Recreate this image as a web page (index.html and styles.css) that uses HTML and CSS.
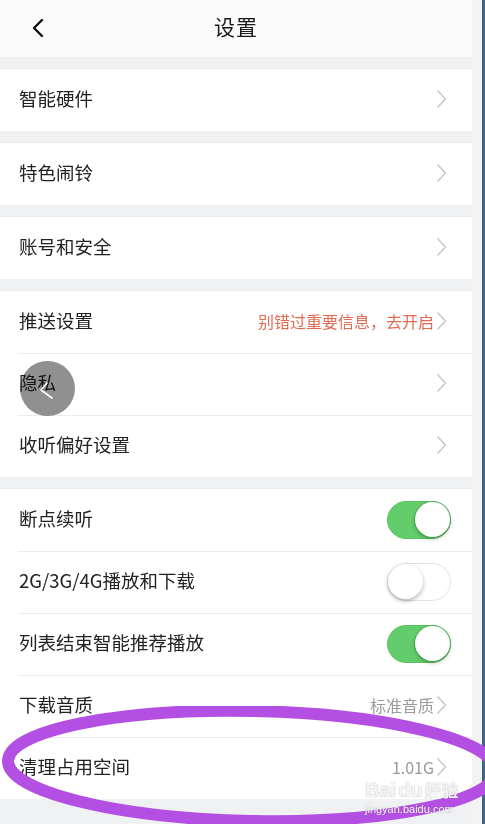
FILE: index.html
```html
<!DOCTYPE html>
<html lang="zh">
<head>
<meta charset="utf-8">
<link rel="stylesheet" href="styles.css">
</head>
<body>
<div class="screen">
  <div class="phone">
    <header class="nav">
      <svg class="back" width="14" height="20" viewBox="0 0 14 20"><path d="M11 2 L3 10 L11 18" fill="none" stroke="#111" stroke-width="2.4" stroke-linecap="round" stroke-linejoin="round"/></svg>
      <div class="title">设置</div>
    </header>

    <section class="group">
      <div class="row"><span class="label">智能硬件</span><svg class="chev" width="11" height="20" viewBox="0 0 11 20"><path d="M1.5 1.5 L9.5 10 L1.5 18.5" fill="none" stroke="#c3c3c3" stroke-width="1.3"/></svg></div>
    </section>
    <section class="group">
      <div class="row"><span class="label">特色闹铃</span><svg class="chev" width="11" height="20" viewBox="0 0 11 20"><path d="M1.5 1.5 L9.5 10 L1.5 18.5" fill="none" stroke="#c3c3c3" stroke-width="1.3"/></svg></div>
    </section>
    <section class="group">
      <div class="row"><span class="label">账号和安全</span><svg class="chev" width="11" height="20" viewBox="0 0 11 20"><path d="M1.5 1.5 L9.5 10 L1.5 18.5" fill="none" stroke="#c3c3c3" stroke-width="1.3"/></svg></div>
    </section>
    <section class="group">
      <div class="row"><span class="label">推送设置</span><span class="value red">别错过重要信息，去开启</span><svg class="chev" width="11" height="20" viewBox="0 0 11 20"><path d="M1.5 1.5 L9.5 10 L1.5 18.5" fill="none" stroke="#c3c3c3" stroke-width="1.3"/></svg></div>
      <div class="row"><span class="label">隐私</span><svg class="chev" width="11" height="20" viewBox="0 0 11 20"><path d="M1.5 1.5 L9.5 10 L1.5 18.5" fill="none" stroke="#c3c3c3" stroke-width="1.3"/></svg></div>
      <div class="row"><span class="label">收听偏好设置</span><svg class="chev" width="11" height="20" viewBox="0 0 11 20"><path d="M1.5 1.5 L9.5 10 L1.5 18.5" fill="none" stroke="#c3c3c3" stroke-width="1.3"/></svg></div>
    </section>
    <section class="group">
      <div class="row"><span class="label">断点续听</span><span class="switch on"><span class="knob"></span></span></div>
      <div class="row"><span class="label">2G/3G/4G播放和下载</span><span class="switch"><span class="knob"></span></span></div>
      <div class="row"><span class="label">列表结束智能推荐播放</span><span class="switch on"><span class="knob"></span></span></div>
      <div class="row"><span class="label">下载音质</span><span class="value">标准音质</span><svg class="chev" width="11" height="20" viewBox="0 0 11 20"><path d="M1.5 1.5 L9.5 10 L1.5 18.5" fill="none" stroke="#c3c3c3" stroke-width="1.3"/></svg></div>
      <div class="row"><span class="label">清理占用空间</span><span class="value">1.01G</span><svg class="chev" width="11" height="20" viewBox="0 0 11 20"><path d="M1.5 1.5 L9.5 10 L1.5 18.5" fill="none" stroke="#c3c3c3" stroke-width="1.3"/></svg></div>
    </section>

    <div class="float-disc"></div>
    <svg class="float-chev" width="55" height="55" viewBox="0 0 55 55"><path d="M27 22 L21 29 L32 37" fill="none" stroke="#fff" stroke-width="1.6" stroke-linecap="round" stroke-linejoin="round"/></svg>
  </div>
  <div class="edge"></div>

  <svg class="circle-mark" width="485" height="130" viewBox="0 0 485 130">
    <ellipse cx="252" cy="60" rx="244" ry="55" transform="rotate(1.2 252 60)" fill="none" stroke="#b34fe2" stroke-width="12"/>
  </svg>

  <div class="watermark">
    <div class="wm-top"><span>Bai</span><span class="paw">du</span><span class="wm-cn">经验</span></div>
    <div class="wm-url">jingyan.baidu.com</div>
  </div>
</div>
</body>
</html>
```

FILE: styles.css
```css
* { box-sizing: border-box; }
html, body {
  margin: 0;
  padding: 0;
  background: #f1f2f4;
  font-family: "Noto Sans CJK SC", "Noto Sans", sans-serif;
}
.screen {
  position: relative;
  width: 485px;
  height: 824px;
  overflow: hidden;
  display: flex;
  background: #f3f3f3;
}
.phone {
  position: relative;
  width: 472px;
  background: #f0f1f3;
  padding-bottom: 27px;
}
.edge {
  flex: 1;
  background: linear-gradient(to right, #f3f3f3 0, #f3f3f3 10px, #2f5f8f 10px, #4a6d86 13px);
}
.nav {
  position: relative;
  height: 57px;
  background: #fafafa;
  display: flex;
  align-items: center;
  justify-content: center;
  padding-bottom: 5px;
}
.back {
  position: absolute;
  left: 31px;
  top: 18px;
}
.title {
  font-size: 21px;
  line-height: 1;
  color: #1a1a1a;
  letter-spacing: 1px;
}
.group {
  margin-top: 11px;
  background: #fff;
  border-top: 1px solid #e9e9ec;
}
.row {
  height: 62px;
  display: flex;
  align-items: center;
  padding: 0 25px 0 19px;
  position: relative;
}
.row + .row::before {
  content: "";
  position: absolute;
  left: 18px;
  right: 0;
  top: 0;
  border-top: 1px solid #ececee;
}
.label {
  flex: 1;
  font-size: 18.5px;
  line-height: 1;
  padding-bottom: 4px;
  color: #222;
}
.value {
  font-size: 16px;
  line-height: 1;
  padding-bottom: 3px;
  color: #9a9a9a;
  margin-right: 2px;
}
.value.red { color: #e16b52; }
.chev {
  display: block;
  margin-bottom: 2px;
}
.switch {
  width: 64px;
  height: 38px;
  border-radius: 19px;
  background: #fff;
  border: 1.5px solid #e2e2e2;
  position: relative;
  margin-right: -4px;
}
.switch.on {
  background: #62cd6a;
  border-color: #58c25f;
}
.knob {
  position: absolute;
  top: 0;
  left: 0;
  width: 35px;
  height: 35px;
  border-radius: 50%;
  background: #fff;
  box-shadow: 0 2px 4px rgba(0,0,0,0.3);
}
.switch.on .knob { left: auto; right: 0; box-shadow: 0 2px 4px rgba(0,0,0,0.25), 0 0 0 1px #56b85d; }
.float-disc {
  position: absolute;
  left: 20px;
  top: 361px;
  width: 55px;
  height: 55px;
  border-radius: 50%;
  background: #909090;
  mix-blend-mode: multiply;
}
.float-chev {
  position: absolute;
  left: 20px;
  top: 361px;
}
.circle-mark {
  position: absolute;
  left: 0;
  top: 706px;
}
.watermark {
  position: absolute;
  left: 365px;
  top: 779px;
  color: rgba(255,255,255,0.9);
  font-family: "Liberation Sans", sans-serif;
  text-shadow: 0 0 1px rgba(120,120,120,0.8);
}
.wm-top {
  font-size: 20px;
  font-weight: bold;
  line-height: 22px;
  display: flex;
  gap: 2px;
}
.wm-cn {
  font-family: "Noto Sans CJK SC", sans-serif;
  font-size: 17px;
}
.wm-url {
  font-size: 11px;
  line-height: 13px;
  margin-top: 2px;
}
```
